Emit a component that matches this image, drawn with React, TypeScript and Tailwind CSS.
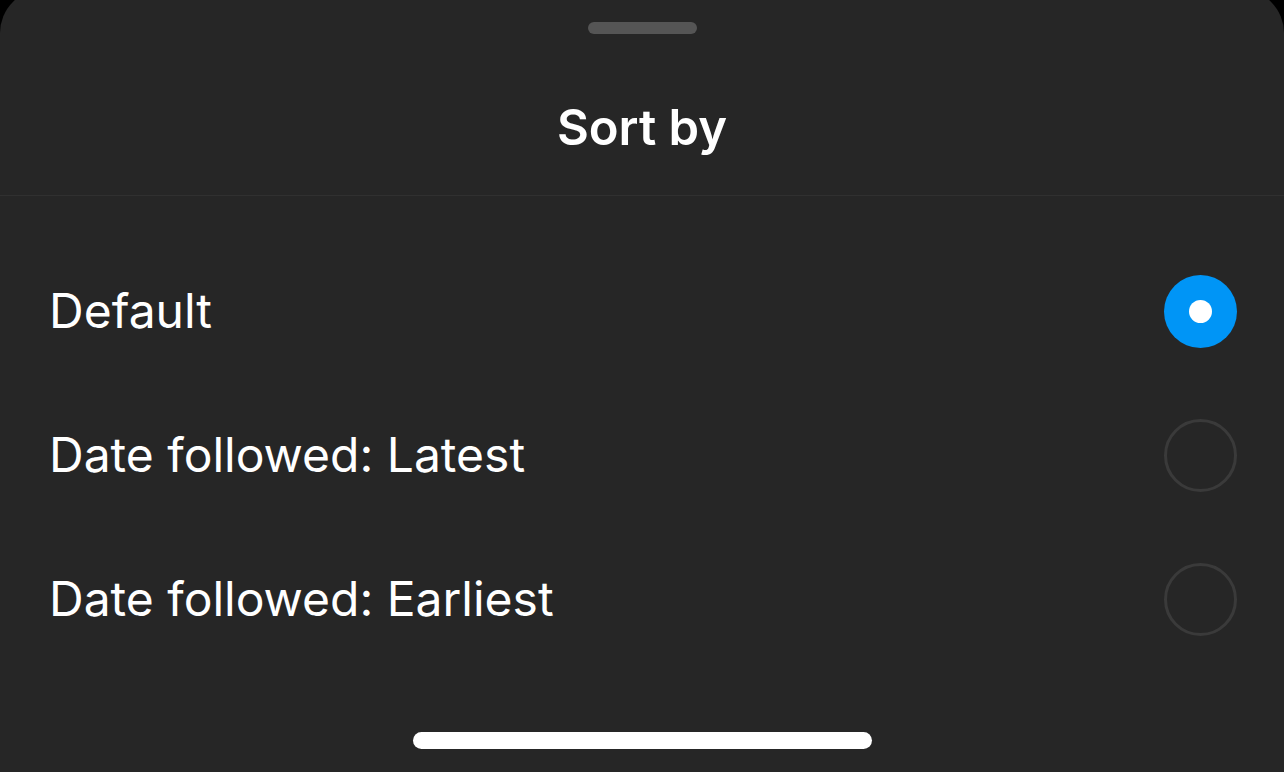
import React, { useState } from 'react';

const options = ['Default', 'Date followed: Latest', 'Date followed: Earliest'];

// Radio bubble used on the right of each row
const Radio: React.FC<{ checked: boolean }> = ({ checked }) =>
  checked ? (
    <div className="w-[73px] h-[73px] rounded-full bg-[#0095f6] flex items-center justify-center">
      <div className="w-[23px] h-[23px] rounded-full bg-white" />
    </div>
  ) : (
    <div className="w-[73px] h-[73px] rounded-full border-[3px] border-[#3a3a3a]" />
  );

const App: React.FC = () => {
  const [selected, setSelected] = useState(0);

  return (
    <div className="w-[1284px] h-[772px] bg-black overflow-hidden" style={{ fontFamily: 'Inter, "Liberation Sans", sans-serif' }}>
      <div className="-mt-[11px] h-[783px] bg-[#262626] rounded-t-[44px] flex flex-col text-white">
        {/* header */}
        <div className="h-[207px] flex flex-col items-center border-b border-[#303030]">
          <div className="mt-[33px] w-[109px] h-[12px] rounded-full bg-[#555555]" />
          <div className="mt-[66px] text-[49px] leading-[56px] font-semibold">Sort by</div>
        </div>

        {/* options */}
        <div className="pt-[43px] flex flex-col">
          {options.map((label, i) => (
            <button
              key={label}
              onClick={() => setSelected(i)}
              className="h-[144px] pl-[49px] pr-[47px] flex items-center justify-between text-left"
            >
              <span className="text-[48px] leading-[56px] font-normal">{label}</span>
              <Radio checked={selected === i} />
            </button>
          ))}
        </div>

        <div className="flex-1" />
        {/* home indicator */}
        <div className="flex justify-center pb-[23px]">
          <div className="w-[459px] h-[17px] rounded-full bg-white" />
        </div>
      </div>
    </div>
  );
};

export default App;
